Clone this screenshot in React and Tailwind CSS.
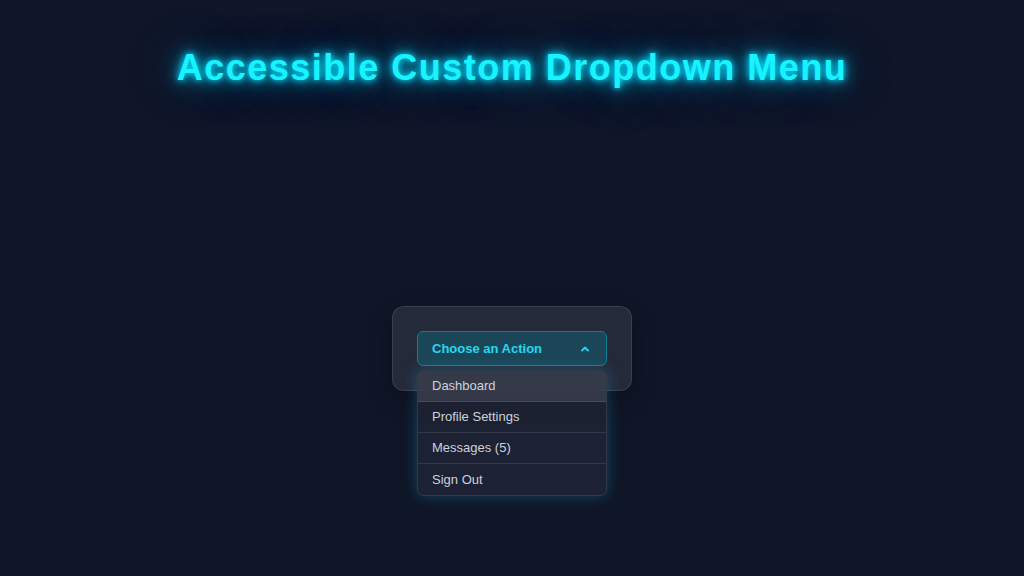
import React, { useState } from "react";

const items = ["Dashboard", "Profile Settings", "Messages (5)", "Sign Out"];

function Dropdown() {
  const [open, setOpen] = useState(true);
  const [active, setActive] = useState(0);

  return (
    <div className="relative w-[190px]">
      <button
        type="button"
        aria-haspopup="listbox"
        aria-expanded={open}
        onClick={() => setOpen(!open)}
        className="flex h-[35px] w-full items-center justify-between rounded-md border border-[#0e7f93] bg-[#1b4658] pl-[14px] pr-[17px] text-[13px] font-bold text-[#22d8f0]"
      >
        <span>Choose an Action</span>
        <svg width="8" height="6" viewBox="0 0 8 6" className={open ? "" : "rotate-180"}>
          <polyline
            points="1,4.5 4,1.5 7,4.5"
            fill="none"
            stroke="#22d8f0"
            strokeWidth="1.8"
            strokeLinecap="round"
            strokeLinejoin="round"
          />
        </svg>
      </button>

      {/* Menu list */}
      {open && (
        <ul
          role="listbox"
          className="absolute left-0 top-[39px] z-10 w-full overflow-hidden rounded-md border border-[#2c3a4a] bg-[rgba(31,35,52,0.88)] shadow-[0_0_14px_rgba(34,211,238,0.25)]"
        >
          {items.map((x, i) => (
            <li
              key={x}
              role="option"
              aria-selected={active === i}
              onMouseEnter={() => setActive(i)}
              className={`flex h-[31px] items-center px-[14px] text-[13px] text-[#cdd1da] ${
                i < items.length - 1 ? "border-b border-white/10" : ""
              } ${active === i ? "bg-white/10" : ""}`}
            >
              {x}
            </li>
          ))}
        </ul>
      )}
    </div>
  );
}

export default function App() {
  return (
    <div className="flex min-h-screen flex-col items-center bg-[#0f1628] font-['Liberation_Sans',Arial,sans-serif]">
      <h1 className="mt-[48px] text-[36px] font-bold leading-[40px] tracking-[1.5px] text-[#19f3ff] [text-shadow:0_0_6px_#00e5ff,0_0_14px_#00d5ff,0_0_30px_rgba(0,200,255,0.6),0_0_60px_rgba(0,180,255,0.35)]">
        Accessible Custom Dropdown Menu
      </h1>
      <div className="mt-[218px] rounded-xl border border-white/10 bg-[#252a3b] p-6 shadow-[0_8px_24px_rgba(0,0,0,0.3)]">
        <Dropdown />
      </div>
    </div>
  );
}
